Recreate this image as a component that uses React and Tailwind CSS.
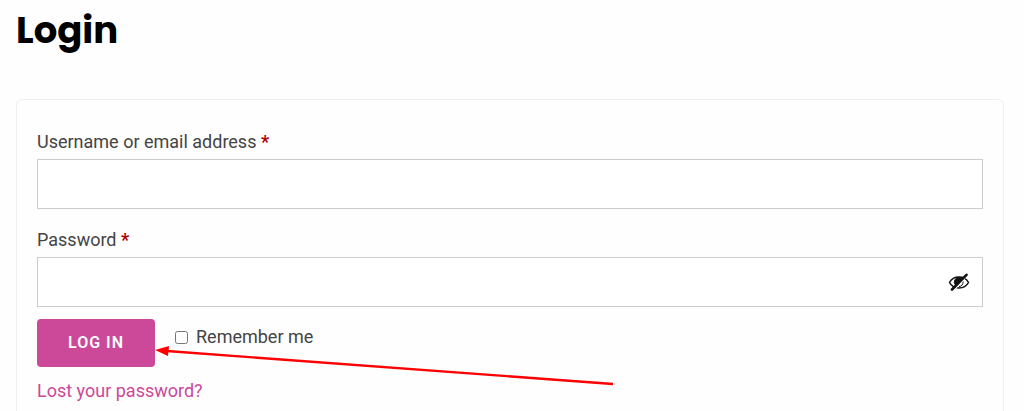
import { useState } from 'react';

const EyeSlash = () => (
  <svg viewBox="0 0 22 18" className="w-[22px] h-[18px]" fill="none" stroke="#111111" aria-hidden="true">
    <path d="M1.500 9.500C3.500 5.800 7 4 11 4s7.500 1.800 9.500 5.500C18.500 13.200 15 15 11 15s-7.500-1.800-9.500-5.500z" strokeWidth="1.500" />
    <path d="M11 4.500a4.500 4.500 0 0 0-3.500 7.500L13.500 5.500A4.500 4.500 0 0 0 11 4.500z" fill="#111111" strokeWidth="1" />
    <path d="M15 8.500a4.200 4.200 0 0 1-4 5" strokeWidth="1" />
    <path d="M20 1.500 5.500 17.500" stroke="#ffffff" strokeWidth="1.500" />
    <path d="M18.500 1.800 4 16.500" strokeWidth="2.600" strokeLinecap="round" />
  </svg>
);

const Arrow = () => (
  <svg
    viewBox="0 0 460 42"
    className="absolute left-full top-[26px] w-[460px] h-[42px] max-w-none pointer-events-none"
    aria-hidden="true"
  >
    <path d="M12 6 458 39" stroke="#ff0000" strokeWidth="2.400" />
    <path d="M0 5 14 1 13 11z" fill="#ff0000" />
  </svg>
);

const Required = () => <span className="font-bold text-[#b30000]">*</span>;

const inputClass =
  'block w-full h-[50px] px-3 bg-white border border-[#cccccc] outline-none focus:border-[#cc4898]';

const App = () => {
  const [username, setUsername] = useState('');
  const [password, setPassword] = useState('');
  const [remember, setRemember] = useState(false);
  const [showPassword, setShowPassword] = useState(false);

  return (
    <main className="flex flex-col min-h-screen pl-4 pr-5 bg-[#fefefe] font-[Roboto,sans-serif] text-lg text-[#444444] overflow-hidden">
      <h1 className="pt-2 pb-[47px] font-[Poppins,Inter,sans-serif] text-[37px] leading-[44px] font-bold text-black">Login</h1>

      <form
        onSubmit={(e) => e.preventDefault()}
        className="flex-1 px-5 pt-7 border border-b-0 border-[#f1eff2] rounded-t-md"
      >
        <label htmlFor="username" className="block h-[31px] leading-7">
          Username or email address <Required />
        </label>
        <input
          id="username"
          type="text"
          value={username}
          onChange={(e) => setUsername(e.target.value)}
          className={inputClass}
        />

        <label htmlFor="password" className="block h-[31px] mt-[17px] leading-7">
          Password <Required />
        </label>
        <div className="relative">
          <input
            id="password"
            type={showPassword ? 'text' : 'password'}
            value={password}
            onChange={(e) => setPassword(e.target.value)}
            className={inputClass}
          />
          <button
            type="button"
            aria-label="Show password"
            onClick={() => setShowPassword(!showPassword)}
            className="absolute right-[13px] inset-y-0 flex items-center"
          >
            <EyeSlash />
          </button>
        </div>

        <div className="flex items-start mt-3">
          <div className="relative">
            <button
              type="submit"
              className="block h-12 w-[118px] rounded-sm bg-[#cc4898] text-base font-semibold tracking-[1px] text-white"
            >
              LOG IN
            </button>
            <Arrow />
          </div>
          <label className="flex items-center h-9 ml-5">
            <input
              type="checkbox"
              checked={remember}
              onChange={(e) => setRemember(e.target.checked)}
              className="w-[13px] h-[13px] mr-2"
            />
            Remember me
          </label>
        </div>

        <a href="#lost-password" className="inline-block mt-2.5 leading-7 text-[#cc4898]">
          Lost your password?
        </a>
      </form>
    </main>
  );
};

export default App;
